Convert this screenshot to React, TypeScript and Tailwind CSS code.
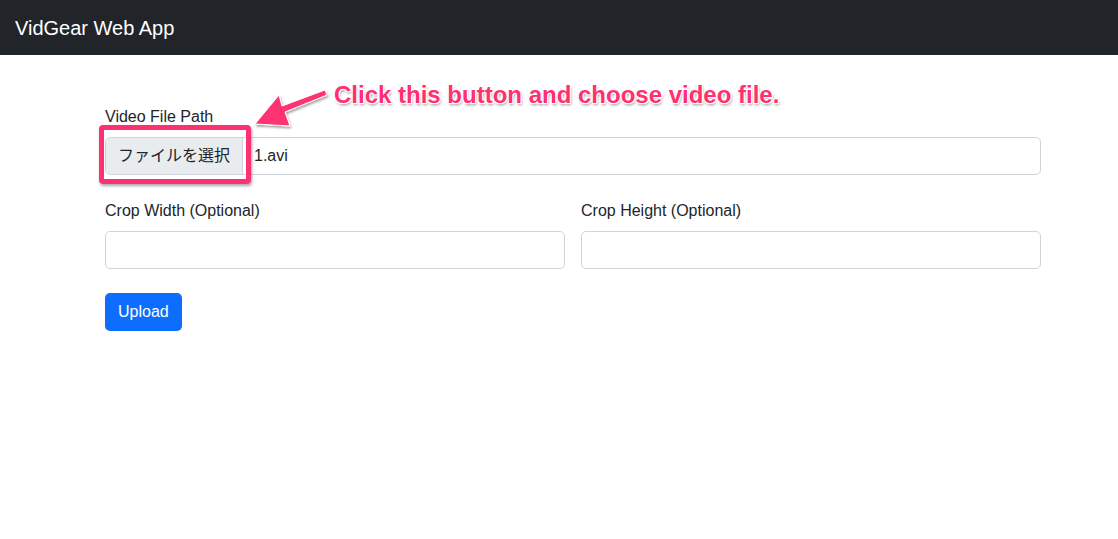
import React from 'react';

const PINK = '#ff3072';

const App: React.FC = () => {
  return (
    <div className="min-h-screen bg-white text-[#212529] font-['Liberation_Sans','Noto_Sans_CJK_JP',sans-serif] relative">
      {/* navbar */}
      <nav className="h-[55px] bg-[#212529] flex items-center px-[15px]">
        <span className="text-white text-[20px] leading-none">VidGear Web App</span>
      </nav>

      <main className="ml-[105px] w-[936px] pt-[50px]">
        <div>
          <label className="block text-[16px] leading-[24px] mb-[8px]">Video File Path</label>
          <div className="h-[38px] flex items-stretch border border-[#ced4da] rounded-[5px] overflow-hidden">
            <span className="bg-[#e9ecef] border-r border-[#ced4da] px-[12px] flex items-center text-[16px]">ファイルを選択</span>
            <span className="flex items-center pl-[11px] text-[16px]">1.avi</span>
          </div>
        </div>

        <div className="grid grid-cols-2 gap-4 mt-[24px]">
          <div>
            <label className="block text-[16px] leading-[24px] mb-[8px]">Crop Width (Optional)</label>
            <input className="w-full h-[38px] border border-[#ced4da] rounded-[5px] px-3" />
          </div>
          <div>
            <label className="block text-[16px] leading-[24px] mb-[8px]">Crop Height (Optional)</label>
            <input className="w-full h-[38px] border border-[#ced4da] rounded-[5px] px-3" />
          </div>
        </div>

        <button className="mt-[24px] h-[38px] px-[13px] bg-[#0d6efd] text-white text-[16px] rounded-[5px]">Upload</button>
      </main>

      {/* annotation overlay */}
      <div className="absolute left-[99px] top-[125px] w-[152px] h-[59px] border-[5px] border-[#ff3072] rounded-[4px] shadow-[1px_2px_3px_rgba(0,0,0,0.35)]" />
      <svg className="absolute left-0 top-0" width="400" height="140" style={{ overflow: 'visible' }}>
        <defs>
          <filter id="sh" x="-20%" y="-20%" width="140%" height="140%">
            <feDropShadow dx="1" dy="2" stdDeviation="1.2" floodColor="#000" floodOpacity="0.35" />
          </filter>
        </defs>
        <path
          d="M325 90 L327 95 L285 112 L290 126 L255 124 L279 95 L282 106 Z"
          fill={PINK}
          stroke="#fff"
          strokeWidth="1"
          strokeLinejoin="round"
          filter="url(#sh)"
        />
      </svg>
      <div
        className="absolute left-[334px] top-[81px] text-[24px] leading-[28px] font-bold text-[#ff3072] whitespace-nowrap"
        style={{ textShadow: '-1px -1px 0 #fff, 1px -1px 0 #fff, -1px 1px 0 #fff, 1px 1px 0 #fff, 1px 2px 3px rgba(0,0,0,0.45)' }}
      >
        Click this button and choose video file.
      </div>
    </div>
  );
};

export default App;
